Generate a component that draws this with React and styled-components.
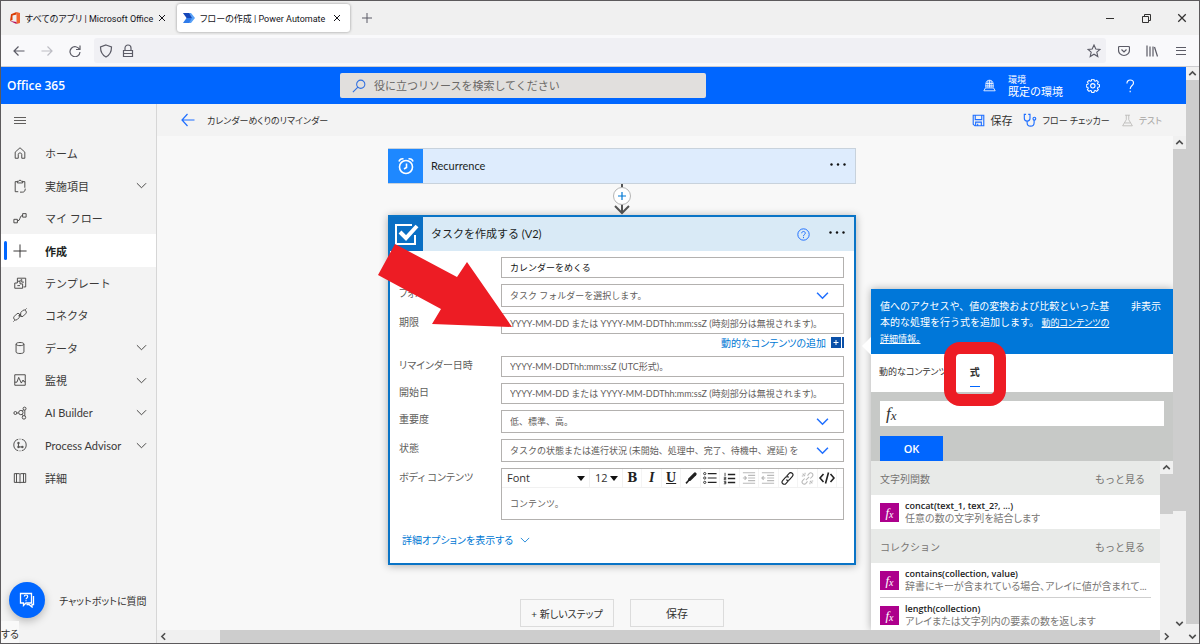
import React, { useState } from 'react';
import styled, { createGlobalStyle, css } from 'styled-components';

const GlobalStyle = createGlobalStyle`
  *, *::before, *::after {
    box-sizing: border-box;
  }
  body {
    margin: 0;
    font-family: Lato, 'Noto Sans CJK JP', sans-serif;
    font-size: 11px;
    color: #323130;
    overflow: hidden;
  }
  button, input, select, textarea {
    font: inherit;
    color: inherit;
    margin: 0;
    padding: 0;
    border: 0;
    border-radius: 0;
    background: none;
    outline: none;
  }
  svg {
    display: block;
    flex: none;
  }
`;

// kana set on its proportional widths, as in the UI fonts
const proportional = css`
  font-feature-settings: 'palt';
`;

const openSans = css`
  font-family: 'Open Sans', 'Noto Sans CJK JP', sans-serif;
`;

// Browser window
const Window = styled.div`
  display: flex;
  flex-direction: column;
  height: 100vh;
  border: 1px solid #5c5a5c;
  overflow: hidden;
`;

const TabStrip = styled.div`
  display: flex;
  align-items: center;
  height: 34px;
  flex: none;
  background: #f0f0f0;
`;

const BrowserTab = styled.div`
  ${proportional}
  display: flex;
  align-items: center;
  height: 28px;
  width: ${(p) => (p.$active ? '173px' : '176px')};
  padding: 0 ${(p) => (p.$active ? '8px' : '10px')} 0 ${(p) => (p.$active ? '5px' : '8px')};
  gap: 4px;
  font-family: Roboto, 'Noto Sans CJK JP', sans-serif;
  font-size: 9px;
  color: #15141a;
  border-radius: 3px;
  white-space: nowrap;
  background: ${(p) => (p.$active ? '#fff' : 'transparent')};
  box-shadow: ${(p) => (p.$active ? '0 0 3px rgba(0, 0, 0, 0.4)' : 'none')};
`;

const TabTitle = styled.span`
  flex: 1;
`;

const IconButton = styled.button`
  display: flex;
  align-items: center;
  justify-content: center;
  width: ${(p) => p.$w || 20}px;
  height: 20px;
  flex: none;
  color: ${(p) => p.$color || 'inherit'};
`;

const TabClose = styled(IconButton)`
  width: 10px;
`;

const WindowControls = styled.div`
  display: flex;
  margin-left: auto;
`;

const NavBar = styled.div`
  display: flex;
  align-items: center;
  height: 32px;
  flex: none;
  padding-left: 4px;
  background: #f9f9fb;
  border-bottom: 1px solid #ccccd0;
  color: #5b5b66;
`;

const AddressBar = styled.div`
  display: flex;
  align-items: center;
  flex: 1;
  height: 25px;
  margin-left: 5px;
  padding: 0 2px;
  border-radius: 3px;
  background: #f0f0f4;
`;

const AddressInput = styled.input`
  flex: 1;
  min-width: 0;
`;

const Body = styled.div`
  display: flex;
  flex: 1;
  min-height: 0;
`;

const Page = styled.div`
  display: flex;
  flex-direction: column;
  flex: 1;
  min-width: 0;
`;

// Suite header
const SuiteHeader = styled.header`
  display: flex;
  align-items: center;
  height: 37px;
  flex: none;
  background: #0066ff;
  color: #fff;
`;

const Brand = styled.div`
  ${openSans}
  flex: 0 0 339px;
  padding-left: 6px;
  font-size: 12px;
  font-weight: 600;
`;

const SearchBox = styled.label`
  display: flex;
  align-items: center;
  flex: 0 1 366px;
  height: 25px;
  padding-left: 12px;
  gap: 8px;
  border-radius: 2px;
  background: #e1dfdd;
  color: #2f6fe0;
`;

const SearchInput = styled.input`
  flex: 1;
  min-width: 0;
  font-size: 11px;
  color: #605e5c;
  &::placeholder {
    color: #6b6967;
    opacity: 1;
  }
`;

const Environment = styled.button`
  display: flex;
  align-items: center;
  gap: 12px;
  margin-left: auto;
  text-align: left;
`;

const EnvironmentText = styled.span`
  display: flex;
  flex-direction: column;
  font-size: 11px;
  line-height: 12px;
`;

const EnvironmentCaption = styled.span`
  font-size: 9px;
  line-height: 12px;
`;

const HeaderTools = styled.div`
  display: flex;
  padding: 0 46px 0 20px;
  gap: 17px;
`;

const Workspace = styled.div`
  display: flex;
  flex: 1;
  min-height: 0;
`;

// Left navigation
const Sidebar = styled.aside`
  display: flex;
  flex-direction: column;
  width: 156px;
  flex: none;
  border-right: 1px solid #d6d6d6;
  background: #f3f3f3;
`;

const MenuToggle = styled.button`
  display: flex;
  align-items: center;
  height: 33px;
  padding-left: 12px;
  color: #605e5c;
`;

const NavList = styled.nav`
  display: grid;
  grid-auto-rows: 1fr;
  height: 357px;
  flex: none;
`;

const NavLink = styled.a`
  display: flex;
  align-items: center;
  padding: 0 9px 0 3px;
  font-size: 11px;
  font-weight: ${(p) => (p.$selected ? 700 : 400)};
  color: ${(p) => (p.$selected ? '#201f1e' : '#3b3a39')};
  background: ${(p) => (p.$selected ? '#fff' : 'transparent')};
  text-decoration: none;
  white-space: nowrap;

  &::before {
    content: '';
    width: 3px;
    height: 19px;
    margin-right: 6px;
    border-radius: 2px;
    background: ${(p) => (p.$selected ? '#0066ff' : 'transparent')};
  }
`;

const NavLabel = styled.span`
  flex: 1;
  margin-left: 18px;
`;

const ChatBot = styled.div`
  display: flex;
  align-items: center;
  margin-top: auto;
  padding: 0 0 3px 8px;
  gap: 14px;
  font-size: 10px;
  white-space: nowrap;
  ${proportional}
`;

const ChatButton = styled.button`
  display: flex;
  align-items: center;
  justify-content: center;
  width: 36px;
  height: 36px;
  flex: none;
  border-radius: 50%;
  background: #0066ff;
  color: #fff;
  box-shadow: 0 3px 8px rgba(0, 0, 0, 0.25);
`;

const ChatRest = styled.div`
  align-self: flex-start;
  height: 22px;
  line-height: 26px;
  font-size: 10px;
  background: #f9f9f9;
  ${proportional}
`;

// Designer
const Main = styled.main`
  display: flex;
  flex-direction: column;
  flex: 1;
  min-width: 0;
  background: #f8f8f8;
`;

const CommandBar = styled.div`
  display: flex;
  align-items: center;
  height: 32px;
  flex: none;
  padding: 0 24px 0 21px;
  background: #f3f3f3;
`;

const FlowTitle = styled.h1`
  flex: 1;
  margin: 0 0 0 9px;
  font-size: 9px;
  font-weight: 400;
  color: #323130;
  ${proportional}
`;

const Command = styled.button`
  display: flex;
  align-items: center;
  gap: 5px;
  margin-left: 11px;
  font-size: ${(p) => (p.$compact ? '9px' : '11px')};
  color: ${(p) => (p.disabled ? '#a6a4a2' : '#323130')};
  ${proportional}

  svg {
    color: ${(p) => (p.disabled ? '#b8b6b4' : '#1f6fff')};
  }
`;

const CanvasRow = styled.div`
  display: flex;
  flex: 1;
  min-height: 0;
`;

const Canvas = styled.div`
  position: relative;
  display: flex;
  flex-direction: column;
  align-items: center;
  flex: 1;
  min-width: 0;
  padding: 12px 86px 0 0;
  overflow: hidden;
`;

const StepColumn = styled.div`
  position: relative;
  display: flex;
  flex-direction: column;
  width: 468px;
  max-width: 100%;
`;

const TriggerCard = styled.section`
  display: flex;
  align-items: center;
  height: 36px;
  border: 1px solid #c8d2dc;
  border-left: 0;
  background: #deecfd;
`;

const StepIcon = styled.div`
  display: flex;
  align-items: center;
  justify-content: center;
  width: ${(p) => p.$w}px;
  height: 34px;
  background: ${(p) => p.$color};
  color: #fff;
`;

const StepTitle = styled.h2`
  flex: 1;
  margin: 0 0 0 8px;
  font-size: 11px;
  line-height: 14px;
  font-weight: 400;
  color: #201f1e;
`;

const Connector = styled.div`
  display: flex;
  justify-content: center;
  height: 31px;
`;

const ActionCard = styled.section`
  border: 2px solid #0a74c6;
  background: #fff;
  box-shadow: 0 1px 8px rgba(0, 0, 0, 0.3);
`;

const ActionHeader = styled.div`
  display: flex;
  align-items: center;
  height: 34px;
  background: #d9eaf6;
`;

const MoreButton = styled(IconButton)`
  width: 34px;
  color: #111;
`;

const Form = styled.form`
  display: flex;
  flex-direction: column;
  gap: 6px;
  padding: 6px 10px 0 9px;
`;

const FieldRow = styled.div`
  display: grid;
  grid-template-columns: 102px 1fr;
  align-items: start;
`;

const FieldLabel = styled.label`
  font-size: 10px;
  line-height: 18px;
  color: #605e5c;
  ${proportional}
`;

const fieldBox = css`
  width: 100%;
  border: 1px solid #b3b1af;
  background: #fff;
  font-size: 9px;
  color: #605e5c;
`;

const TextInput = styled.input`
  ${fieldBox}
  display: block;
  height: 21px;
  padding: 0 8px;
  color: #111;
  &::placeholder {
    color: #5f5d5b;
    opacity: 1;
  }
`;

const SelectWrap = styled.div`
  ${fieldBox}
  display: flex;
  align-items: center;
  height: 23px;
  padding-right: 14px;
  color: #1f6fff;
`;

const FieldSelect = styled.select`
  flex: 1;
  min-width: 0;
  height: 100%;
  padding-left: 8px;
  appearance: none;
  color: #5f5d5b;
  text-overflow: clip;
`;

const DynamicContent = styled.button`
  display: flex;
  align-items: center;
  gap: 5px;
  height: 16px;
  margin-left: auto;
  font-size: 10px;
  color: #0078d4;
  ${proportional}
`;

const Editor = styled.div`
  ${fieldBox}
  height: 52px;
`;

const EditorToolbar = styled.div`
  display: flex;
  height: 19px;
  padding-right: 6px;
  border-bottom: 1px solid #f1f1f1;
  color: #111;
`;

const ToolSelect = styled.label`
  display: flex;
  align-items: center;
  width: ${(p) => p.$w}px;
  padding: 0 4px 0 5px;
  border-right: 1px solid #f1f1f1;

  select {
    ${openSans}
    flex: 1;
    min-width: 0;
    appearance: none;
    font-size: 11px;
    line-height: 14px;
    color: #323130;
  }
`;

const ToolButton = styled.button`
  display: flex;
  align-items: center;
  justify-content: center;
  flex: 1;
  min-width: 0;
  border-right: 1px solid #f4f4f4;
  color: ${(p) => (p.disabled ? '#b9b9b9' : '#222')};
`;

const ToolLetter = styled.span`
  font-family: ${(p) => (p.$slab ? "'DejaVu Serif'" : "'Liberation Serif'")}, serif;
  font-size: ${(p) => (p.$slab ? 12 : 14)}px;
  line-height: 14px;
  font-weight: 700;
  font-style: ${(p) => (p.$italic ? 'italic' : 'normal')};
  text-decoration: ${(p) => (p.$underline ? 'underline' : 'none')};
`;

const EditorText = styled.textarea`
  display: block;
  width: 100%;
  height: 31px;
  padding: 9px 8px 0;
  line-height: 14px;
  resize: none;
  &::placeholder {
    color: #5f5d5b;
    opacity: 1;
  }
`;

const AdvancedToggle = styled.button`
  display: flex;
  align-items: center;
  gap: 7px;
  margin: 5px 0 15px 3px;
  height: 17px;
  font-size: 10px;
  color: #0078d4;
  ${proportional}
`;

const Actions = styled.div`
  display: flex;
  justify-content: center;
  gap: 16px;
  margin-top: 34px;
`;

const ActionButton = styled.button`
  width: 94px;
  height: 28px;
  border: 1px solid #dcdcdc;
  font-size: ${(p) => (p.$small ? '10px' : '11px')};
  ${proportional}
`;

// drawn over the card
const ArrowMark = styled.svg`
  position: absolute;
  left: -10px;
  top: 94px;
`;

// Expression flyout
const Flyout = styled.section`
  position: absolute;
  top: 153px;
  right: 0;
  bottom: 0;
  width: 302px;
  display: flex;
  flex-direction: column;
  background: #fff;
  box-shadow: 0 0 8px rgba(0, 0, 0, 0.3);
`;

const FlyoutPointer = styled.svg`
  position: absolute;
  left: -9px;
  top: 48px;
`;

const FlyoutBanner = styled.div`
  display: flex;
  align-items: flex-start;
  gap: 15px;
  padding: 9px 12px 8px 9px;
  background: #0077d9;
  color: #fff;
  font-size: 10px;
  line-height: 16px;
`;

const BannerText = styled.p`
  flex: 1;
  margin: 0;

  a {
    color: inherit;
    font-size: 9px;
    line-height: 12px;
    ${proportional}
  }
`;

const FlyoutTabs = styled.div`
  display: flex;
  height: 38px;
  padding-left: 8px;
  gap: 23px;
  ${proportional}
`;

const FlyoutTab = styled.button`
  display: flex;
  align-items: center;
  font-size: ${(p) => (p.$active ? 10 : 9)}px;
  font-weight: ${(p) => (p.$active ? 700 : 400)};
  color: #323130;
`;

const TabText = styled.span`
  padding: 5px 0 7px;
  line-height: 14px;
  border-bottom: 1px solid ${(p) => (p.$active ? '#0066ff' : 'transparent')};
`;

const RingMark = styled.div`
  position: absolute;
  left: 73px;
  top: 53px;
  width: 62px;
  height: 64px;
  border: 12px solid #ed1c24;
  border-radius: 16px;
`;

const ExpressionArea = styled.div`
  display: flex;
  flex-direction: column;
  align-items: flex-start;
  gap: 10px;
  padding: 9px 9px 0;
  background: #c7c9c7;
`;

const ExpressionBox = styled.label`
  display: flex;
  align-items: center;
  width: 100%;
  height: 25px;
  padding-left: 6px;
  gap: 6px;
  background: #fff;
`;

const FxText = styled.span`
  font-family: 'Liberation Serif', serif;
  font-style: italic;
  font-size: ${(p) => p.$size}px;
  line-height: 1;

  sub {
    font-size: ${(p) => p.$sub}px;
    line-height: 0;
    vertical-align: -1px;
  }
`;

const OkButton = styled.button`
  ${openSans}
  width: 63px;
  height: 25px;
  background: #0066ff;
  color: #fff;
  font-weight: 600;
`;

const ResultArea = styled.div`
  display: flex;
  flex: 1;
  min-height: 0;
`;

const ResultList = styled.div`
  flex: 1;
  min-width: 0;
  overflow: hidden;
`;

const GroupHeader = styled.div`
  display: flex;
  align-items: center;
  justify-content: space-between;
  height: 34px;
  padding: 0 15px 0 9px;
  background: #e8eae8;
  font-size: 10px;
  color: #767472;

  a {
    color: inherit;
    text-decoration: none;
  }
`;

const FunctionItem = styled.button`
  display: flex;
  align-items: center;
  gap: 6px;
  width: 100%;
  height: 34px;
  padding: 0 9px;
  text-align: left;
`;

const FunctionIcon = styled.span`
  display: flex;
  align-items: center;
  justify-content: center;
  width: 19px;
  height: 19px;
  flex: none;
  background: #ad008c;
  color: #fff;
`;

const FunctionText = styled.span`
  display: flex;
  flex-direction: column;
  min-width: 0;
  line-height: 12px;
`;

const FunctionName = styled.span`
  ${openSans}
  font-size: 9px;
  font-weight: 600;
  color: #222;
`;

const FunctionHint = styled.span`
  font-size: 10px;
  color: #7a7876;
  white-space: nowrap;
  overflow: hidden;
  text-overflow: ellipsis;
  ${proportional}
`;

const Divider = styled.hr`
  height: 1px;
  margin: 0 9px;
  border: 0;
  background: #cfcfcf;
`;

// Scroll bars
const Bar = styled.div`
  display: flex;
  flex: none;
  flex-direction: ${(p) => (p.$horizontal ? 'row' : 'column')};
  width: ${(p) => (p.$horizontal ? 'auto' : '13px')};
  height: ${(p) => (p.$horizontal ? '13px' : 'auto')};
  background: #f0f0f0;
  color: #505050;
`;

const BarArrow = styled.button`
  display: flex;
  align-items: center;
  justify-content: center;
  width: 13px;
  height: 13px;
  flex: none;
`;

const BarSpace = styled.div`
  flex: ${(p) => p.$grow} 1 0;
  background: ${(p) => (p.$thumb ? '#cdcdcd' : 'transparent')};
`;

const Corner = styled.div`
  width: 13px;
  background: #f0f0f0;
`;

const Svg = ({ size = 14, box = 16, sw = 1, children, ...rest }) => (
  <svg
    width={size}
    height={size}
    viewBox={`0 0 ${box} ${box}`}
    fill="none"
    stroke="currentColor"
    strokeWidth={sw}
    aria-hidden="true"
    {...rest}
  >
    {children}
  </svg>
);

const chevrons = {
  up: 'M4 10l4-4 4 4',
  down: 'M4 6l4 4 4-4',
  left: 'M10 4L6 8l4 4',
  right: 'M6 4l4 4-4 4',
};

const Chevron = ({ dir = 'down', size = 14, sw = 1 }) => (
  <Svg size={size} sw={sw}>
    <path d={chevrons[dir]} />
  </Svg>
);

const WideChevron = ({ size = 12, sw = 1 }) => (
  <Svg size={size} box={12} sw={sw}>
    <path d="M1 3.5l5 5 5-5" />
  </Svg>
);

const Close = ({ size = 8, sw = 1 }) => (
  <Svg size={size} box={8} sw={sw}>
    <path d="M1 1l6 6M7 1L1 7" />
  </Svg>
);

const Lines = () => (
  <Svg size={14} box={14}>
    <path d="M1 3.5h12M1 6.5h12M1 9.5h12" />
  </Svg>
);

const Dots = () => (
  <Svg size={18} box={18} stroke="none" fill="currentColor">
    <circle cx="2.5" cy="7.5" r="1.2" />
    <circle cx="9" cy="7.5" r="1.2" />
    <circle cx="15.5" cy="7.5" r="1.2" />
  </Svg>
);

const Triangle = () => (
  <Svg size={8} box={8} stroke="none" fill="#111">
    <path d="M0 2h8L4 7z" />
  </Svg>
);

const navIcons = {
  home: <path d="M2.500 7L8 2l5.500 5v7h-3.500V9.500c0-1-.8-1.500-2-1.500s-2 .5-2 1.500V14H2.500z" />,
  clipboard: <path d="M6 14.500H2.500V3H5M11 3h2.500v7M5 4.500h6V2.500H9.500L8 1 6.500 2.500H5zM8 15h3c2 0 3-1.500 3-4" />,
  flow: <path d="M1 9.500h4v4H1zM11 3h4v4h-4zM5 11.500c4 0 2-6.500 6-6.500" />,
  plus: <path d="M8 .5v15M.5 8h15" />,
  template: <path d="M5 6V2.500h9.500v10H12M2 8h3V6h3v3h3v5H2zM8 6c0-1 1-2 2-2v3h2.500M5 11h3" />,
  connector: (
    <path d="M9 5l2-2a2.300 2.300 0 013.500 3.500L12 9a2.300 2.300 0 01-3.500 0zM7 11l-2 2a2.300 2.300 0 01-3.500-3.500L4 7a2.300 2.300 0 013.500 0zM14 2l1.500-1.500M2 14L.5 15.500M6.500 9l2-2M8 10l1.500-1.500" />
  ),
  data: <path d="M3.500 3.500v9c0 2.400 9 2.400 9 0v-9c0-2.400-9-2.400-9 0zc0 2.400 9 2.400 9 0" />,
  monitor: <path d="M2 2h12v12H2zM2 10.500h2.500L6.500 5l3 6.500L11.500 8l1 2H14" />,
  ai: (
    <>
      <circle cx="2.700" cy="8" r="1.700" />
      <circle cx="9" cy="7.500" r="2.500" />
      <circle cx="13.200" cy="3" r="1.700" />
      <circle cx="12.500" cy="13" r="2" />
      <path d="M4.400 8h2M10.800 5.700L12 4.300M10.500 9.500l1 1.700M13.500 4.700v6.500" />
    </>
  ),
  process: (
    <>
      <path d="M6 1.500a6.700 6.700 0 000 13M10 1.500a6.700 6.700 0 010 13M7.500 1.300h1M7.500 14.700h1" />
      <path d="M5.500 5h1.500v1.500H5.500zM5.500 9.500h1.500V11H5.500zM10 9.500h1.500V11H10zM6.200 6.500v3M7 10.200h3" />
    </>
  ),
  book: <path d="M1.500 3h5.500l1 .7 1-.7h5.500v10H9l-1 .7-1-.7H1.500zM8 3.700v10M4 3v10M12 3v10" />,
};

const navItems = [
  { icon: 'home', label: 'ホーム' },
  { icon: 'clipboard', label: '実施項目', expandable: true },
  { icon: 'flow', label: 'マイ フロー' },
  { icon: 'plus', label: '作成' },
  { icon: 'template', label: 'テンプレート' },
  { icon: 'connector', label: 'コネクタ' },
  { icon: 'data', label: 'データ', expandable: true },
  { icon: 'monitor', label: '監視', expandable: true },
  { icon: 'ai', label: 'AI Builder', expandable: true },
  { icon: 'process', label: 'Process Advisor', expandable: true },
  { icon: 'book', label: '詳細' },
];

const tools = [
  { name: '太字', node: <ToolLetter $slab>B</ToolLetter> },
  { name: '斜体', node: <ToolLetter $italic>I</ToolLetter> },
  { name: '下線', node: <ToolLetter $underline>U</ToolLetter> },
  {
    name: '色',
    node: (
      <Svg size={13}>
        <path d="M13.500 2.500L7 9" strokeWidth="4" strokeLinecap="round" />
        <path d="M6.500 9.500L2.500 14" strokeWidth="2" />
      </Svg>
    ),
  },
  {
    name: '箇条書き',
    node: (
      <Svg size={14}>
        <path d="M5.500 3h10M5.500 8h10M5.500 13h10" strokeWidth="1.300" />
        <circle cx="2" cy="3" r="1.300" />
        <circle cx="2" cy="8" r="1.300" />
        <circle cx="2" cy="13" r="1.300" />
      </Svg>
    ),
  },
  {
    name: '番号付きリスト',
    node: (
      <Svg size={13}>
        <path d="M6 3h9M6 8h9M6 13h9" strokeWidth="1.800" />
        <path d="M2.500 1v4M1 6.500h2.500V8H1.500v1.500H4M1 11.500h2.500v3H1M1.500 13h2" />
      </Svg>
    ),
  },
  {
    name: 'インデント',
    disabled: true,
    node: (
      <Svg size={14} sw={1.3}>
        <path d="M1 2h14M7 5h8M7 8h8M7 11h8M1 14h14M1 8h4M3 6l2 2-2 2" />
      </Svg>
    ),
  },
  {
    name: 'インデント解除',
    disabled: true,
    node: (
      <Svg size={14} sw={1.3}>
        <path d="M1 2h14M7 5h8M7 8h8M7 11h8M1 14h14M1 8h4M3 6L1 8l2 2" />
      </Svg>
    ),
  },
  {
    name: 'リンク',
    node: (
      <Svg size={13} sw={1.4}>
        <path d="M7 5l3-3.200a2.600 2.600 0 014 3.500l-3.500 4a2.600 2.600 0 01-4 0M9 11l-3 3.200a2.600 2.600 0 01-4-3.500l3.500-4a2.600 2.600 0 014 0" />
      </Svg>
    ),
  },
  {
    name: 'リンク解除',
    disabled: true,
    node: (
      <Svg size={13} sw={1.3}>
        <path d="M8 4.500l2-2.500a2.600 2.600 0 014 3.500L11.500 8M8 11.500L6 14a2.600 2.600 0 01-4-3.500L4.500 8M2 2l3 3M5 1v2M1 5h2M14 14l-3-3M11 15v-2M15 11h-2M6 10l4-4" />
      </Svg>
    ),
  },
  {
    name: 'コード',
    node: (
      <Svg size={16} sw={1.6}>
        <path d="M4.500 4L1 8l3.500 4M11.500 4L15 8l-3.500 4M9.500 2.500l-3 11" />
      </Svg>
    ),
  },
];

const functionGroups = [
  {
    name: '文字列関数',
    items: [{ name: 'concat(text_1, text_2?, ...)', hint: '任意の数の文字列を結合します' }],
  },
  {
    name: 'コレクション',
    items: [
      {
        name: 'contains(collection, value)',
        hint: '辞書にキーが含まれている場合、アレイに値が含まれて...',
      },
      { name: 'length(collection)', hint: 'アレイまたは文字列内の要素の数を返します' },
    ],
  },
];

const Scrollbar = ({ parts }) => (
  <Bar>
    <BarArrow type="button" aria-label="上へスクロール">
      <Chevron dir="up" size={13} sw={2} />
    </BarArrow>
    <BarSpace $grow={parts[0]} $thumb />
    <BarSpace $grow={parts[1]} />
    <BarArrow type="button" aria-label="下へスクロール">
      <Chevron dir="down" size={13} sw={2} />
    </BarArrow>
  </Bar>
);

const Fx = ({ size, sub }) => (
  <FxText $size={size} $sub={sub}>
    f<sub>x</sub>
  </FxText>
);

const BrowserChrome = () => (
  <>
    <TabStrip>
      <BrowserTab>
        <svg width="12" height="14" viewBox="0 0 12 14">
          <path d="M7.500 1L11 2v10l-3.500 1z" fill="#f0652f" />
          <path d="M7.500 1L2 3.200 1 10l2.500-1V4.500l4-1z" fill="#d83b01" />
          <path d="M1 10l6.500 3v-2l-4.500-.8z" fill="#b7125c" />
        </svg>
        <TabTitle>すべてのアプリ | Microsoft Office</TabTitle>
        <TabClose type="button" aria-label="タブを閉じる">
          <Close />
        </TabClose>
      </BrowserTab>
      <BrowserTab $active>
        <svg width="14" height="12" viewBox="0 0 14 12">
          <path d="M1 1h8l4 5-4 5H5l4-5z" fill="#5aa2f7" />
          <path d="M1 1h6l3 5H4.500z" fill="#1546b8" />
          <path d="M4.500 6L1 11h6l3-5z" fill="#2f7bea" />
        </svg>
        <TabTitle>フローの作成 | Power Automate</TabTitle>
        <TabClose type="button" aria-label="タブを閉じる">
          <Close />
        </TabClose>
      </BrowserTab>
      <IconButton type="button" aria-label="新しいタブ" $w={34} $color="#5b5b66">
        <Svg size={10} box={10}>
          <path d="M5 0v10M0 5h10" />
        </Svg>
      </IconButton>
      <WindowControls>
        <IconButton type="button" aria-label="最小化" $w={36}>
          <Svg size={8} box={8}>
            <path d="M0 4.500h8" />
          </Svg>
        </IconButton>
        <IconButton type="button" aria-label="元に戻す" $w={36}>
          <Svg size={9} box={9}>
            <path d="M.5 2.500h6v6h-6zM2.500 2.500v-2h6v6h-2" />
          </Svg>
        </IconButton>
        <IconButton type="button" aria-label="閉じる" $w={35}>
          <Close size={10} />
        </IconButton>
      </WindowControls>
    </TabStrip>
    <NavBar>
      <IconButton type="button" aria-label="戻る" $w={28}>
        <Svg size={12} box={12} sw={1.2}>
          <path d="M11.500 6H1M5.500 1.500L1 6l4.500 4.500" />
        </Svg>
      </IconButton>
      <IconButton type="button" aria-label="進む" $w={28} $color="#bdbdc4">
        <Svg size={12} box={12} sw={1.2}>
          <path d="M.5 6H11M6.500 1.500L11 6l-4.500 4.500" />
        </Svg>
      </IconButton>
      <IconButton type="button" aria-label="再読み込み" $w={28}>
        <Svg size={12} box={12} sw={1.2}>
          <path d="M10.500 4.500A5 5 0 1011 7M11 .5v4H7" />
        </Svg>
      </IconButton>
      <AddressBar>
        <IconButton type="button" aria-label="保護" $w={20}>
          <Svg size={14} box={14} sw={1.2}>
            <path d="M7 1l5.500 2c0 5-1.500 8-5.500 10C3 11 1.500 8 1.500 3z" />
          </Svg>
        </IconButton>
        <IconButton type="button" aria-label="接続の情報" $w={24}>
          <Svg size={14} box={14} sw={1.2}>
            <path d="M2.500 6.500h9v6h-9zM4 6.500V4a3 3 0 016 0v2.500M2.500 9.500h9" />
          </Svg>
        </IconButton>
        <AddressInput aria-label="アドレス" />
        <IconButton type="button" aria-label="ブックマーク">
          <Svg size={14} box={14} sw={1.1}>
            <path d="M7 1l1.800 4 4.200.4-3.200 2.800 1 4.300L7 10.200l-3.800 2.300 1-4.300L1 5.400 5.200 5z" />
          </Svg>
        </IconButton>
      </AddressBar>
      <IconButton type="button" aria-label="Pocket" $w={36}>
        <Svg size={12} box={12} sw={1.2}>
          <path d="M1.500 1.500h9a1 1 0 011 1V5A5.500 5.500 0 01.5 5V2.500a1 1 0 011-1zM3.500 4.500L6 7l2.500-2.500" />
        </Svg>
      </IconButton>
      <IconButton type="button" aria-label="ライブラリ" $w={20}>
        <Svg size={12} box={12} sw={1.2}>
          <path d="M1 .5v11M4 1.500v10M7 1.500v10M8.500 2l3 9.500" />
        </Svg>
      </IconButton>
      <IconButton type="button" aria-label="メニュー" $w={37}>
        <Svg size={10} box={10}>
          <path d="M0 1.500h10M0 4.500h10M0 8.500h10" />
        </Svg>
      </IconButton>
    </NavBar>
  </>
);

const Header = () => (
  <SuiteHeader>
    <Brand>Office 365</Brand>
    <SearchBox>
      <Svg size={14} sw={1.2}>
        <circle cx="10" cy="6" r="4.700" />
        <path d="M6.700 9.300L1 15" />
      </Svg>
      <SearchInput aria-label="検索" placeholder="役に立つリソースを検索してください" />
    </SearchBox>
    <Environment type="button">
      <Svg size={13}>
        <path d="M3.500 10.500V7a4.500 5.500 0 019 0v3.500M3.500 5.500h9M3 8.500h10M8 1.500v9M6 2.500v8M10 2.500v8" />
        <path d="M3 11h10l2 3.500H1z" />
      </Svg>
      <EnvironmentText>
        <EnvironmentCaption>環境</EnvironmentCaption>
        既定の環境
      </EnvironmentText>
    </Environment>
    <HeaderTools>
      <IconButton type="button" aria-label="設定">
        <Svg size={14} sw={1.2}>
          <path d="M6.700 1.300h2.600l.4 1.800 1.300.5 1.500-1 1.900 1.900-1 1.500.5 1.300 1.800.4v2.600l-1.800.4-.5 1.300 1 1.500-1.900 1.900-1.500-1-1.300.5-.4 1.800H6.700l-.4-1.800-1.300-.5-1.500 1-1.900-1.900 1-1.500-.5-1.300L.3 10.300V7.700l1.800-.4L2.600 6l-1-1.500 1.900-1.900 1.500 1 1.300-.5z" transform="translate(0 -1) scale(.98)" />
          <circle cx="7.800" cy="7.800" r="2.500" />
        </Svg>
      </IconButton>
      <IconButton type="button" aria-label="ヘルプ">
        <Svg size={14} sw={1.3}>
          <path d="M4.500 5c0-2.200 1.400-3.800 3.700-3.800S12 2.700 12 4.700C12 7.500 8.200 7.500 8.200 11.500M8.200 13.500V15" />
        </Svg>
      </IconButton>
    </HeaderTools>
  </SuiteHeader>
);

const Navigation = () => (
  <Sidebar>
    <MenuToggle type="button" aria-label="ナビゲーション">
      <Lines />
    </MenuToggle>
    <NavList>
      {navItems.map((item) => (
        <NavLink key={item.icon} href="#" $selected={item.label === '作成'}>
          <Svg size={14}>{navIcons[item.icon]}</Svg>
          <NavLabel>{item.label}</NavLabel>
          {item.expandable && <WideChevron size={11} />}
        </NavLink>
      ))}
    </NavList>
    <ChatBot>
      <ChatButton type="button" aria-label="チャットボットに質問する">
        <Svg size={16}>
          <path d="M1.500 1.500h11v9.500H7L4.500 13.500V11h-3z" strokeWidth="1.300" />
          <path d="M14.500 4v8.500h-1.500V15l-3-2.500H7.500" strokeWidth="1.300" />
          <path d="M5.300 4.500c0-2 3.400-2 3.400 0C8.700 6 7 5.800 7 7.300M7 8.300v1" strokeWidth="1.200" />
        </Svg>
      </ChatButton>
      チャットボットに質問
    </ChatBot>
    <ChatRest>する</ChatRest>
  </Sidebar>
);

const SelectField = ({ id, text }) => (
  <SelectWrap>
    <FieldSelect id={id}>
      <option>{text}</option>
    </FieldSelect>
    <WideChevron size={13} sw={1.4} />
  </SelectWrap>
);

const TaskForm = () => {
  const [subject, setSubject] = useState('カレンダーをめくる');

  return (
    <Form>
      <FieldRow>
        <FieldLabel htmlFor="subject">件名</FieldLabel>
        <TextInput id="subject" value={subject} onChange={(e) => setSubject(e.target.value)} />
      </FieldRow>
      <FieldRow>
        <FieldLabel htmlFor="folder">フォルダー</FieldLabel>
        <SelectField id="folder" text="タスク フォルダーを選択します。" />
      </FieldRow>
      <FieldRow>
        <FieldLabel htmlFor="due">期限</FieldLabel>
        <div>
          <TextInput
            id="due"
            placeholder="YYYY-MM-DD または YYYY-MM-DDThh:mm:ssZ (時刻部分は無視されます)。"
          />
          <DynamicContent type="button">
            動的なコンテンツの追加
            <svg width="13" height="11" viewBox="0 0 13 11">
              <path d="M0 0h10v11H0zM11 0h2v11h-2z" fill="#0a50a8" />
              <path d="M5 3v5M2.500 5.500h5" stroke="#fff" />
            </svg>
          </DynamicContent>
        </div>
      </FieldRow>
      <FieldRow>
        <FieldLabel htmlFor="reminder">リマインダー日時</FieldLabel>
        <TextInput id="reminder" placeholder="YYYY-MM-DDThh:mm:ssZ (UTC形式)。" />
      </FieldRow>
      <FieldRow>
        <FieldLabel htmlFor="start">開始日</FieldLabel>
        <TextInput
          id="start"
          placeholder="YYYY-MM-DD または YYYY-MM-DDThh:mm:ssZ (時刻部分は無視されます)。"
        />
      </FieldRow>
      <FieldRow>
        <FieldLabel htmlFor="importance">重要度</FieldLabel>
        <SelectField id="importance" text="低、標準、高。" />
      </FieldRow>
      <FieldRow>
        <FieldLabel htmlFor="status">状態</FieldLabel>
        <SelectField
          id="status"
          text="タスクの状態または進行状況 (未開始、処理中、完了、待機中、遅延) を"
        />
      </FieldRow>
      <FieldRow>
        <FieldLabel htmlFor="content">ボディ コンテンツ</FieldLabel>
        <Editor>
          <EditorToolbar>
            <ToolSelect $w={88}>
              <select aria-label="フォント">
                <option>Font</option>
              </select>
              <Triangle />
            </ToolSelect>
            <ToolSelect $w={33}>
              <select aria-label="サイズ">
                <option>12</option>
              </select>
              <Triangle />
            </ToolSelect>
            {tools.map((tool) => (
              <ToolButton key={tool.name} type="button" aria-label={tool.name} disabled={tool.disabled}>
                {tool.node}
              </ToolButton>
            ))}
          </EditorToolbar>
          <EditorText id="content" placeholder="コンテンツ。" />
        </Editor>
      </FieldRow>
      <AdvancedToggle type="button">
        詳細オプションを表示する
        <WideChevron size={10} />
      </AdvancedToggle>
    </Form>
  );
};

const ExpressionFlyout = () => (
  <Flyout>
    <FlyoutPointer width="9" height="18" viewBox="0 0 9 18">
      <path d="M9 0v18L0 9z" fill="#fff" />
    </FlyoutPointer>
    <FlyoutBanner>
      <BannerText>
        値へのアクセスや、値の変換および比較といった基本的な処理を行う式を追加します。{' '}
        <a href="#">動的コンテンツの詳細情報。</a>
      </BannerText>
      <button type="button">非表示</button>
    </FlyoutBanner>
    <FlyoutTabs>
      <FlyoutTab type="button">
        <TabText>動的なコンテンツ</TabText>
      </FlyoutTab>
      <FlyoutTab type="button" $active>
        <TabText $active>式</TabText>
      </FlyoutTab>
    </FlyoutTabs>
    <ExpressionArea>
      <ExpressionBox>
        <Fx size={17} sub={13} />
        <AddressInput aria-label="式" />
      </ExpressionBox>
      <OkButton type="button">OK</OkButton>
    </ExpressionArea>
    <ResultArea>
      <ResultList>
        {functionGroups.map((group) => (
          <React.Fragment key={group.name}>
            <GroupHeader>
              {group.name}
              <a href="#">もっと見る</a>
            </GroupHeader>
            {group.items.map((item, i) => (
              <React.Fragment key={item.name}>
                {i > 0 && <Divider />}
                <FunctionItem type="button">
                  <FunctionIcon>
                    <Fx size={13} sub={10} />
                  </FunctionIcon>
                  <FunctionText>
                    <FunctionName>{item.name}</FunctionName>
                    <FunctionHint>{item.hint}</FunctionHint>
                  </FunctionText>
                </FunctionItem>
              </React.Fragment>
            ))}
          </React.Fragment>
        ))}
      </ResultList>
      <Bar>
        <BarArrow type="button" aria-label="上へスクロール">
          <Chevron dir="up" size={13} sw={2} />
        </BarArrow>
        <BarSpace $grow={40} $thumb />
        <BarSpace $grow={116} />
      </Bar>
    </ResultArea>
    <RingMark />
  </Flyout>
);

const Designer = () => (
  <Canvas>
    <StepColumn>
      <TriggerCard>
        <StepIcon $color="#1e88ff" $w={35}>
          <Svg size={18} box={18} sw={1.6}>
            <circle cx="9" cy="10" r="6.500" />
            <path d="M9.500 6.500v4l-2.500 1.500M2 4.500C2.500 2.500 4.500 1.300 6.500 2M16 4.500C15.500 2.500 13.500 1.300 11.500 2" />
          </Svg>
        </StepIcon>
        <StepTitle>Recurrence</StepTitle>
        <MoreButton type="button" aria-label="その他">
          <Dots />
        </MoreButton>
      </TriggerCard>
      <Connector>
        <svg width="20" height="31" viewBox="0 0 20 31" fill="none">
          <path d="M10 0v29M3 22l7 7 7-7" stroke="#555" strokeWidth="2" />
          <circle cx="10" cy="12" r="8.500" fill="#fff" stroke="#b5b5b5" />
          <path d="M10 8v8M6 12h8" stroke="#0078d4" strokeWidth="1.200" />
        </svg>
      </Connector>
      <ActionCard>
        <ActionHeader>
          <StepIcon $color="#0a6fc4" $w={33}>
            <Svg size={26} box={26} sw={2}>
              <path d="M18 4H2v19h19V14" />
              <path d="M6 11l6 6L23 5" strokeWidth="4" />
            </Svg>
          </StepIcon>
          <StepTitle>タスクを作成する (V2)</StepTitle>
          <IconButton type="button" aria-label="ヘルプ" $w={34} $color="#1f6fff">
            <Svg size={13} sw={1.2}>
              <circle cx="8" cy="8" r="7" />
              <path d="M5.800 6.500c0-3 4.400-3 4.400 0C10.200 8 8 8 8 10M8 11v1.500" />
            </Svg>
          </IconButton>
          <MoreButton type="button" aria-label="その他">
            <Dots />
          </MoreButton>
        </ActionHeader>
        <TaskForm />
      </ActionCard>
      <Actions>
        <ActionButton type="button" $small>
          + 新しいステップ
        </ActionButton>
        <ActionButton type="button">保存</ActionButton>
      </Actions>
      <ArrowMark width="136" height="88" viewBox="0 0 136 88">
        <path d="M17 2l62 33 10-15 45 65-80-3 9-15L0 33z" fill="#ed1c24" />
      </ArrowMark>
    </StepColumn>
    <ExpressionFlyout />
  </Canvas>
);

const App = () => (
  <Window>
    <GlobalStyle />
    <BrowserChrome />
    <Body>
      <Page>
        <Header />
        <Workspace>
          <Navigation />
          <Main>
            <CommandBar>
              <IconButton type="button" aria-label="戻る" $color="#1f6fff">
                <Svg size={14} box={14} sw={1.2}>
                  <path d="M13.500 7H1M6.500 1L1 7l5.500 6" />
                </Svg>
              </IconButton>
              <FlowTitle>カレンダーめくりのリマインダー</FlowTitle>
              <Command type="button">
                <Svg size={13} sw={1.4}>
                  <path d="M1.500 1.500h13v13h-11l-2-2zM4 1.500v5.500h8V1.500M4.500 14.500V10h7v4.500M7 12v2.500" />
                </Svg>
                保存
              </Command>
              <Command type="button" $compact>
                <Svg size={14} sw={1.3}>
                  <path d="M3.500 1.500H1.500V6a3.200 3.200 0 006.500 0V1.500H6M4.700 9.500v1.500a4 4 0 008 0V8" />
                  <circle cx="13" cy="6.500" r="1.600" />
                </Svg>
                フロー チェッカー
              </Command>
              <Command type="button" $compact disabled>
                <Svg size={13}>
                  <path d="M5 1.500h6M6.500 1.500V7L2 14.500h12L9.500 7V1.500M4.500 11h7" />
                </Svg>
                テスト
              </Command>
            </CommandBar>
            <CanvasRow>
              <Designer />
              <Scrollbar parts={[362, 106]} />
            </CanvasRow>
            <Bar $horizontal>
              <BarArrow type="button" aria-label="左へスクロール">
                <Chevron dir="left" size={13} sw={2} />
              </BarArrow>
              <BarSpace $grow={50} />
              <BarSpace $grow={940} $thumb />
              <BarArrow type="button" aria-label="右へスクロール">
                <Chevron dir="right" size={13} sw={2} />
              </BarArrow>
              <Corner />
            </Bar>
          </Main>
        </Workspace>
      </Page>
      <Scrollbar parts={[544, 6]} />
    </Body>
  </Window>
);

export default App;
